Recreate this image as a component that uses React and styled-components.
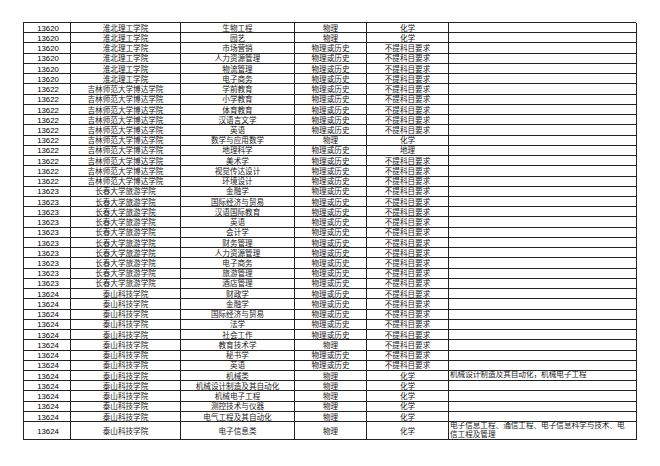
import React from 'react';
import styled, { createGlobalStyle } from 'styled-components';

const P = '物理';
const PH = '物理或历史';
const C = '化学';
const N = '不提科目要求';

const rows = [
    ['13620', '淮北理工学院', '生物工程', P, C],
    ['13620', '淮北理工学院', '园艺', P, C],
    ['13620', '淮北理工学院', '市场营销', PH, N],
    ['13620', '淮北理工学院', '人力资源管理', PH, N],
    ['13620', '淮北理工学院', '物流管理', PH, N],
    ['13620', '淮北理工学院', '电子商务', PH, N],
    ['13622', '吉林师范大学博达学院', '学前教育', PH, N],
    ['13622', '吉林师范大学博达学院', '小学教育', PH, N],
    ['13622', '吉林师范大学博达学院', '体育教育', PH, N],
    ['13622', '吉林师范大学博达学院', '汉语言文学', PH, N],
    ['13622', '吉林师范大学博达学院', '英语', PH, N],
    ['13622', '吉林师范大学博达学院', '数学与应用数学', P, C],
    ['13622', '吉林师范大学博达学院', '地理科学', PH, '地理'],
    ['13622', '吉林师范大学博达学院', '美术学', PH, N],
    ['13622', '吉林师范大学博达学院', '视觉传达设计', PH, N],
    ['13622', '吉林师范大学博达学院', '环境设计', PH, N],
    ['13623', '长春大学旅游学院', '金融学', PH, N],
    ['13623', '长春大学旅游学院', '国际经济与贸易', PH, N],
    ['13623', '长春大学旅游学院', '汉语国际教育', PH, N],
    ['13623', '长春大学旅游学院', '英语', PH, N],
    ['13623', '长春大学旅游学院', '会计学', PH, N],
    ['13623', '长春大学旅游学院', '财务管理', PH, N],
    ['13623', '长春大学旅游学院', '人力资源管理', PH, N],
    ['13623', '长春大学旅游学院', '电子商务', PH, N],
    ['13623', '长春大学旅游学院', '旅游管理', PH, N],
    ['13623', '长春大学旅游学院', '酒店管理', PH, N],
    ['13624', '泰山科技学院', '财政学', PH, N],
    ['13624', '泰山科技学院', '金融学', PH, N],
    ['13624', '泰山科技学院', '国际经济与贸易', PH, N],
    ['13624', '泰山科技学院', '法学', PH, N],
    ['13624', '泰山科技学院', '社会工作', PH, N],
    ['13624', '泰山科技学院', '教育技术学', P, N],
    ['13624', '泰山科技学院', '秘书学', PH, N],
    ['13624', '泰山科技学院', '英语', PH, N],
    ['13624', '泰山科技学院', '机械类', P, C, ['机械设计制造及其自动化，机械电子工程']],
    ['13624', '泰山科技学院', '机械设计制造及其自动化', P, C],
    ['13624', '泰山科技学院', '机械电子工程', P, C],
    ['13624', '泰山科技学院', '测控技术与仪器', P, C],
    ['13624', '泰山科技学院', '电气工程及其自动化', P, C],
    ['13624', '泰山科技学院', '电子信息类', P, C, ['电子信息工程、通信工程、电子信息科学与技术、电', '信工程及管理']],
];

export default function App() {
    return (
        <Page>
            <GlobalStyle />
            <Sheet>
                {rows.map(([code, school, major, first, second, note], i) => (
                    <React.Fragment key={i}>
                        <Code>{code}</Code>
                        <Cell>{school}</Cell>
                        <Cell>{major}</Cell>
                        <Cell>{first}</Cell>
                        <Cell>{second}</Cell>
                        <Note>
                            {note && note.map((line, j) => (
                                <span key={j}>{line}</span>
                            ))}
                        </Note>
                    </React.Fragment>
                ))}
            </Sheet>
        </Page>
    )
}

const GlobalStyle = createGlobalStyle`
html, body {
    margin: 0;
    background: #fff;
}
`;

const Page = styled.div`
width: 660px;
height: 466px;
padding: 22px 0 0 23px;
box-sizing: border-box;
overflow: hidden;
`;

const Sheet = styled.div`
display: grid;
grid-template-columns: 47px 110px 114px 72px 82px 188px;
grid-template-rows: repeat(39, 10.24px) 18px;
width: 613px;
border-top: 1px solid #222;
border-left: 1px solid #222;
box-sizing: border-box;
`;

const Cell = styled.div`
display: flex;
align-items: center;
justify-content: center;
box-sizing: border-box;
padding-top: 1px;
border-right: 1px solid #222;
border-bottom: 1px solid #222;
font-family: "Liberation Serif", "Noto Sans CJK SC", serif;
font-size: 7.6px;
line-height: 9px;
color: #1a1a1a;
white-space: nowrap;
overflow: hidden;
`;

const Code = styled(Cell)`
font-family: "Liberation Sans", Arial, sans-serif;
font-size: 7.8px;
color: #000;
padding-left: 2px;
`;

const Note = styled(Cell)`
flex-direction: column;
align-items: flex-start;
justify-content: center;
padding-left: 1px;
padding-top: 0;
line-height: 8.4px;
`;
